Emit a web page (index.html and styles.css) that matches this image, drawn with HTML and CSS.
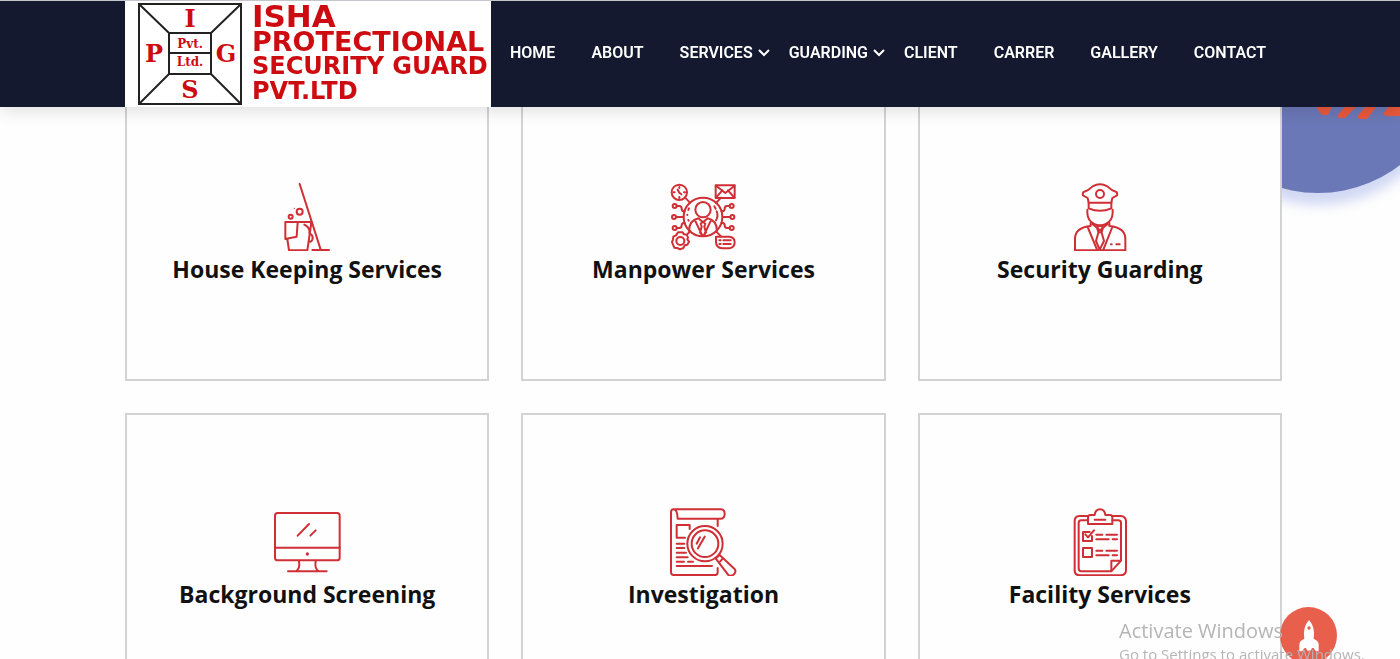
FILE: index.html
```html
<!DOCTYPE html>
<html lang="en">
<head>
    <meta charset="UTF-8">
    <meta name="viewport" content="width=device-width, initial-scale=1.0">
    <title>Isha Protectional Security Guard Pvt.Ltd</title>
    <link rel="stylesheet" href="styles.css">
</head>
<body>
<header class="header">
    <a href="#" class="logo">
        <svg class="logo-mark" viewBox="0 0 104 102">
            <g fill="none" stroke="#222" stroke-width="2">
                <rect x="1" y="1" width="102" height="100"/>
                <rect x="31" y="30" width="42" height="41"/>
                <path d="M31 50H73M1 1L31 30M103 1L73 30M1 101L31 71M103 101L73 71"/>
            </g>
            <g class="logo-letters">
                <text x="52" y="24">I</text>
                <text x="16" y="59">P</text>
                <text x="88" y="59">G</text>
                <text x="52" y="95">S</text>
            </g>
            <g class="logo-small">
                <text x="52" y="45">Pvt.</text>
                <text x="52" y="63">Ltd.</text>
            </g>
        </svg>
        <span class="logo-text">
            <span class="line-lg">ISHA</span>
            <span class="line-md">PROTECTIONAL</span>
            <span class="line-sm">SECURITY GUARD</span>
            <span class="line-sm">PVT.LTD</span>
        </span>
    </a>
    <nav class="nav">
        <a href="#">HOME</a>
        <a href="#">ABOUT</a>
        <a href="#">SERVICES
            <svg class="arrow" viewBox="0 0 12 8"><path d="M1 1l5 5 5-5"/></svg>
        </a>
        <a href="#">GUARDING
            <svg class="arrow" viewBox="0 0 12 8"><path d="M1 1l5 5 5-5"/></svg>
        </a>
        <a href="#">CLIENT</a>
        <a href="#">CARRER</a>
        <a href="#">GALLERY</a>
        <a href="#">CONTACT</a>
    </nav>
</header>

<main class="services">
    <!-- Background shape -->
    <div class="shape"></div>
    <svg class="stripes" viewBox="0 0 100 40">
        <path d="M18 20H34L28 33H22L16 25zM49 20H61L45 36H39L37 34zM69 20H80L67 37H60L57 35zM92 20H100V34H87L83 32z"/>
    </svg>

    <div class="grid">
        <a href="#" class="card">
            <svg class="icon" viewBox="40 38 204 204">
                <path d="M120 41L183 238M158 239H208M77 155H154V164L143 240H88L83 206M77 155V206L111 199 114 156M134 163Q152 172 149 188Q164 197 157 210Q153 216 147 214"/>
                <circle cx="120" cy="124" r="9"/>
                <circle cx="93" cy="139" r="6"/>
                <circle class="fill" cx="104" cy="114" r="2"/>
            </svg>
            <h3>House Keeping Services</h3>
        </a>
        <a href="#" class="card">
            <svg class="icon" viewBox="44 38 204 204">
                <circle cx="146" cy="140" r="58"/>
                <circle cx="146" cy="118" r="23"/>
                <path d="M104 181Q105 150 132 144L146 156 160 144Q187 150 188 181M121 148L143 194M171 148L149 194M139 160L146 154 153 160 150 169 155 187 146 197 137 187 142 169z"/>
                <path d="M102 119l2-5M99 133v1M102 149l1 2M180 108l4 7M187 123q6 13-2 27"/>
                <circle cx="75" cy="66" r="23"/>
                <path d="M75 50v3M75 80v3M58 66h3M89 66h3M70 58l5 9 6 5M92 82l15 15M185 98l15-16"/>
                <rect x="184" y="45" width="57" height="38"/>
                <path d="M185 46l28 22 28-22M185 82l19-22M240 82l-19-22"/>
                <circle cx="61" cy="107" r="6"/>
                <circle cx="59" cy="140" r="6"/>
                <circle cx="61" cy="173" r="6"/>
                <path d="M67 107h8q7 0 7 8t9 8M65 140h22M67 173h8q7 0 7-8t9-8"/>
                <circle cx="232" cy="107" r="6"/>
                <circle cx="234" cy="140" r="6"/>
                <circle cx="232" cy="173" r="6"/>
                <path d="M226 107h-8q-7 0-7 8t-9 8M228 140h-22M226 173h-8q-7 0-7-8t-9-8"/>
                <circle cx="78" cy="212" r="12"/>
                <path d="M71 186h14l4 6 8 1 4 8-2 6 5 7-5 9-8 2-4 8-10 4-8-4-9-1-4-9-3-8 3-7 1-9 8-4zM98 193l10-11M185 183l15 15"/>
                <path d="M185 199H226Q241 201 241 216T226 234H204Q185 232 185 214zM195 210h4M207 210h22M195 221h4M207 221h22"/>
            </svg>
            <h3>Manpower Services</h3>
        </a>
        <a href="#" class="card">
            <svg class="icon" viewBox="48 38 204 204">
                <path d="M116 97L113 83 99 75Q97 69 101 65Q116 60 128 48Q150 36 172 48Q184 60 199 65Q203 69 201 75L187 83 184 97"/>
                <circle cx="150" cy="71" r="12"/>
                <path d="M116 97H184V114Q150 129 116 114zM112 118V128Q113 151 132 161Q150 170 168 161Q187 151 188 128V118"/>
                <path d="M122 158V167Q75 172 75 205V240H226V205Q226 172 178 167V158M113 170L141 238M187 170L160 238M128 162L150 180 172 162M141 172L150 165 159 172 155 186 145 186zM145 187L138 212 149 238 162 212 155 187"/>
                <path d="M183 222h2M199 222h10"/>
            </svg>
            <h3>Security Guarding</h3>
        </a>
        <a href="#" class="card">
            <svg class="icon" viewBox="40 38 204 204">
                <rect x="46" y="53" width="194" height="142" rx="8"/>
                <path d="M46 157H240M114 121L148 86M152 121L168 105M118 197Q122 222 108 228M168 197Q164 222 178 228M85 228H201"/>
                <circle class="fill" cx="143" cy="176" r="5"/>
            </svg>
            <h3>Background Screening</h3>
        </a>
        <a href="#" class="card">
            <svg class="icon" viewBox="44 38 204 204">
                <path d="M70 70Q69 42 57 42Q50 42 50 52V231Q50 239 58 239H183Q190 239 190 231V218M57 42H200Q211 43 211 56T200 70H70M190 70V92"/>
                <path d="M92 127H67V89H106V101M67 145H90M67 158H90M67 172H95M67 186H100M67 199H89M101 199H116M67 212H173"/>
                <circle cx="152" cy="145" r="53"/>
                <circle cx="152" cy="145" r="40"/>
                <path d="M127 145L137 126M131 159L151 124M184 189L196 179 240 220Q247 228 239 237Q229 245 221 238zM198 198L205 190"/>
            </svg>
            <h3>Investigation</h3>
        </a>
        <a href="#" class="card">
            <svg class="icon" viewBox="48 38 204 204">
                <path d="M114 62H88Q74 63 74 77V226Q75 240 89 240H212Q228 239 228 225V77Q227 63 212 62H187"/>
                <path d="M114 75H93Q86 75 86 83V219Q86 228 94 228H184L213 196V83Q213 75 205 75H187M184 228V196H213"/>
                <path d="M114 65Q114 59 122 59H134Q136 42 150 42T166 59H180Q187 59 187 66V86H114zM134 73H166"/>
                <path d="M119 110H99V137H126V122M106 117L114 126 132 105M99 158H126V185H99zM139 118H157M169 118H201M139 132H176M188 132H201M139 166H157M169 166H201M139 180H176M188 180H201"/>
            </svg>
            <h3>Facility Services</h3>
        </a>
    </div>
</main>

<!-- Back to top -->
<button class="to-top" aria-label="Back to top">
    <svg viewBox="0 0 66 96">
        <path d="M33 0Q53 22 47 56Q62 62 62 74V94H54L46 84H42L38 92H28L24 84H20L12 94H4V74Q4 62 19 56Q13 22 33 0z"/>
        <circle cx="33" cy="24" r="5"/>
    </svg>
</button>

<div class="watermark">
    <p class="watermark-title">Activate Windows</p>
    <p>Go to Settings to activate Windows.</p>
</div>
</body>
</html>
```
FILE: styles.css
```css
* {
    box-sizing: border-box;
}
body {
    margin: 0;
    font-family: 'Open Sans', sans-serif;
    background-color: #fefefe;
    color: #111;
}
a {
    color: inherit;
    text-decoration: none;
}
.header {
    position: fixed;
    top: 0;
    left: 0;
    right: 0;
    z-index: 10;
    display: flex;
    height: 107px;
    padding-left: 125px;
    background-color: #14192f;
    border-top: 1px solid #c4c6cc;
    box-shadow: 0 4px 16px rgba(0, 0, 0, 0.12);
}
.logo {
    display: flex;
    flex: none;
    gap: 10px;
    width: 366px;
    padding: 2px 0 2px 13px;
    background-color: #fff;
    color: #cc0c10;
}
.logo-mark {
    width: 104px;
    height: 102px;
    flex: none;
}
.logo-letters, .logo-small {
    fill: #cc0c10;
    font-family: 'DejaVu Serif', serif;
    font-weight: bold;
    text-anchor: middle;
}
.logo-letters {
    font-size: 24px;
}
.logo-small {
    font-size: 12px;
}
.logo-text {
    display: flex;
    flex-direction: column;
    font-family: 'DejaVu Sans', sans-serif;
    font-weight: bold;
    line-height: 25px;
    white-space: nowrap;
}
.line-lg {
    font-size: 31px;
    line-height: 26px;
}
.line-md {
    font-size: 27px;
}
.line-sm {
    font-size: 24px;
}
.nav {
    display: flex;
    align-items: center;
    gap: 36px;
    padding: 0 0 4px 19px;
    color: #fff;
    font-family: 'Roboto', sans-serif;
    font-size: 16px;
    font-weight: 600;
}
.nav a {
    position: relative;
}
.arrow {
    position: absolute;
    left: 100%;
    top: 50%;
    width: 12px;
    height: 8px;
    margin: -3px 0 0 5px;
    fill: none;
    stroke: #fff;
    stroke-width: 2;
}
.services {
    position: relative;
    overflow: hidden;
    padding: 88px 118px 32px 125px;
}
.shape {
    position: absolute;
    top: -75px;
    right: -52px;
    width: 268px;
    height: 268px;
    border-radius: 50%;
    background-color: #6b78b7;
    box-shadow: 0 12px 12px rgba(107, 130, 220, 0.3);
}
.stripes {
    position: absolute;
    top: 82px;
    right: 0;
    width: 100px;
    height: 40px;
    fill: #e9583c;
}
.grid {
    position: relative;
    display: grid;
    grid-template-columns: repeat(3, 1fr);
    gap: 32px;
}
.card {
    display: flex;
    flex-direction: column;
    align-items: center;
    justify-content: center;
    min-height: 293px;
    background-color: #fefefe;
    border: 2px solid #d3d3d3;
}
.card h3 {
    margin: 0;
    font-size: 23px;
    font-weight: 700;
    line-height: 36px;
}
.icon {
    width: 68px;
    height: 68px;
    fill: none;
    stroke: #cf2f35;
    stroke-width: 6;
    stroke-linecap: round;
    stroke-linejoin: round;
}
.icon .fill {
    fill: #cf2f35;
    stroke: none;
}
.to-top {
    position: fixed;
    right: 63px;
    bottom: -5px;
    z-index: 5;
    display: flex;
    align-items: center;
    justify-content: center;
    width: 57px;
    height: 57px;
    padding: 0;
    border: none;
    border-radius: 50%;
    background-color: #e85f4c;
    cursor: pointer;
}
.to-top svg {
    width: 22px;
    height: 32px;
    fill: #fff;
}
.to-top circle {
    fill: #e85f4c;
}
.watermark {
    position: fixed;
    left: calc(100% - 281px);
    bottom: -6px;
    z-index: 6;
    color: #b5b5b5;
    font-size: 15px;
    line-height: 22px;
    white-space: nowrap;
    pointer-events: none;
}
.watermark p {
    margin: 0;
}
.watermark .watermark-title {
    font-size: 20px;
    line-height: 24px;
}
```
